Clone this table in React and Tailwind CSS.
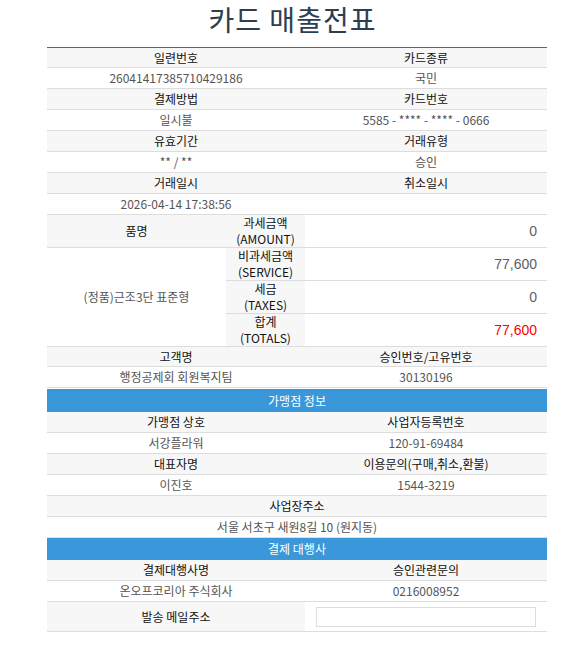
import React from 'react';

const FONT = { fontFamily: '"Noto Sans CJK KR", "Noto Sans", sans-serif' };

function PairRow({ left, right, header, h = 'h-[21px]' }) {
  return (
    <div
      className={`flex ${h} border-b border-[#dddddd] text-[12px] ${
        header ? 'bg-[#f7f7f7] text-[#111111]' : 'bg-white text-[#555555]'
      }`}
    >
      <div className="w-[258px] flex items-center justify-center">{left}</div>
      <div className="flex-1 flex items-center justify-center">{right}</div>
    </div>
  );
}

function FullRow({ children, header }) {
  return (
    <div
      className={`flex h-[21px] items-center justify-center border-b border-[#dddddd] text-[12px] ${
        header ? 'bg-[#f7f7f7] text-[#111111]' : 'bg-white text-[#555555]'
      }`}
    >
      {children}
    </div>
  );
}

function Section({ children, h = 'h-[23px]' }) {
  return (
    <div className={`flex ${h} items-center justify-center bg-[#3a98da] text-[12px] text-white`}>
      {children}
    </div>
  );
}

const amounts = [
  { ko: '과세금액', en: '(AMOUNT)', value: '0' },
  { ko: '비과세금액', en: '(SERVICE)', value: '77,600' },
  { ko: '세금', en: '(TAXES)', value: '0' },
  { ko: '합계', en: '(TOTALS)', value: '77,600', red: true },
];

export default function App() {
  return (
    <div className="w-[585px] min-h-[660px] bg-white" style={FONT}>
      {/* 제목 */}
      <div className="h-[47px] flex justify-center pt-[2px]">
        <h1 className="text-[28px] leading-[34px] text-[#2c3e50] font-normal tracking-[1px]">카드 매출전표</h1>
      </div>

      <div className="ml-[47px] w-[500px] border-t border-[#666666]">
        <PairRow header left="일련번호" right="카드종류" h="h-[20px]" />
        <PairRow left="26041417385710429186" right="국민" />
        <PairRow header left="결제방법" right="카드번호" />
        <PairRow left="일시불" right="5585 - **** - **** - 0666" />
        <PairRow header left="유효기간" right="거래유형" />
        <PairRow left="** / **" right="승인" />
        <PairRow header left="거래일시" right="취소일시" />
        <PairRow left="2026-04-14 17:38:56" right="" />

        {/* 금액 */}
        <div className="grid grid-cols-[179px_79px_242px] grid-rows-[33px_33px_33px_33px] text-[12px]">
          <div className="col-start-1 row-start-1 flex items-center justify-center bg-[#f7f7f7] text-[#111111] border-b border-[#dddddd]">
            품명
          </div>
          <div className="col-start-1 row-start-2 row-span-3 flex items-center justify-center bg-white text-[#555555] border-b border-[#dddddd]">
            (정품)근조3단 표준형
          </div>
          {amounts.map((a, i) => (
            <React.Fragment key={a.ko}>
              <div
                className="col-start-2 flex flex-col items-center justify-center bg-[#f7f7f7] text-[#111111] leading-[16px] border-b border-[#dddddd]"
                style={{ gridRowStart: i + 1 }}
              >
                <span>{a.ko}</span>
                <span>{a.en}</span>
              </div>
              <div
                className={`col-start-3 flex items-center justify-end pr-[10px] border-b border-[#dddddd] text-[14px] ${
                  a.red ? 'text-[#ff0000]' : 'text-[#5a5f66]'
                }`}
                style={{ gridRowStart: i + 1, fontFamily: '"Liberation Sans", Arial, sans-serif' }}
              >
                {a.value}
              </div>
            </React.Fragment>
          ))}
        </div>

        <PairRow header left="고객명" right="승인번호/고유번호" h="h-[20px]" />
        <PairRow left="행정공제회 회원복지팀" right="30130196" />

        <div className="h-px" />
        <Section>가맹점 정보</Section>
        <PairRow header left="가맹점 상호" right="사업자등록번호" />
        <PairRow left="서강플라워" right="120-91-69484" />
        <PairRow header left="대표자명" right="이용문의(구매,취소,환불)" />
        <PairRow left="이진호" right="1544-3219" />
        <FullRow header>사업장주소</FullRow>
        <FullRow>서울 서초구 새원8길 10 (원지동)</FullRow>

        <Section h="h-[22px]">결제 대행사</Section>
        <PairRow header left="결제대행사명" right="승인관련문의" />
        <PairRow left="온오프코리아 주식회사" right="0216008952" />

        {/* 메일 */}
        <div className="flex h-[30px] border-b border-[#dddddd] text-[12px]">
          <div className="w-[258px] flex items-center justify-center bg-[#f7f7f7] text-[#111111]">발송 메일주소</div>
          <div className="flex-1 flex items-center px-[11px]">
            <input type="text" className="w-full h-[20px] border border-[#dddddd] bg-white outline-none" />
          </div>
        </div>
      </div>
    </div>
  );
}
